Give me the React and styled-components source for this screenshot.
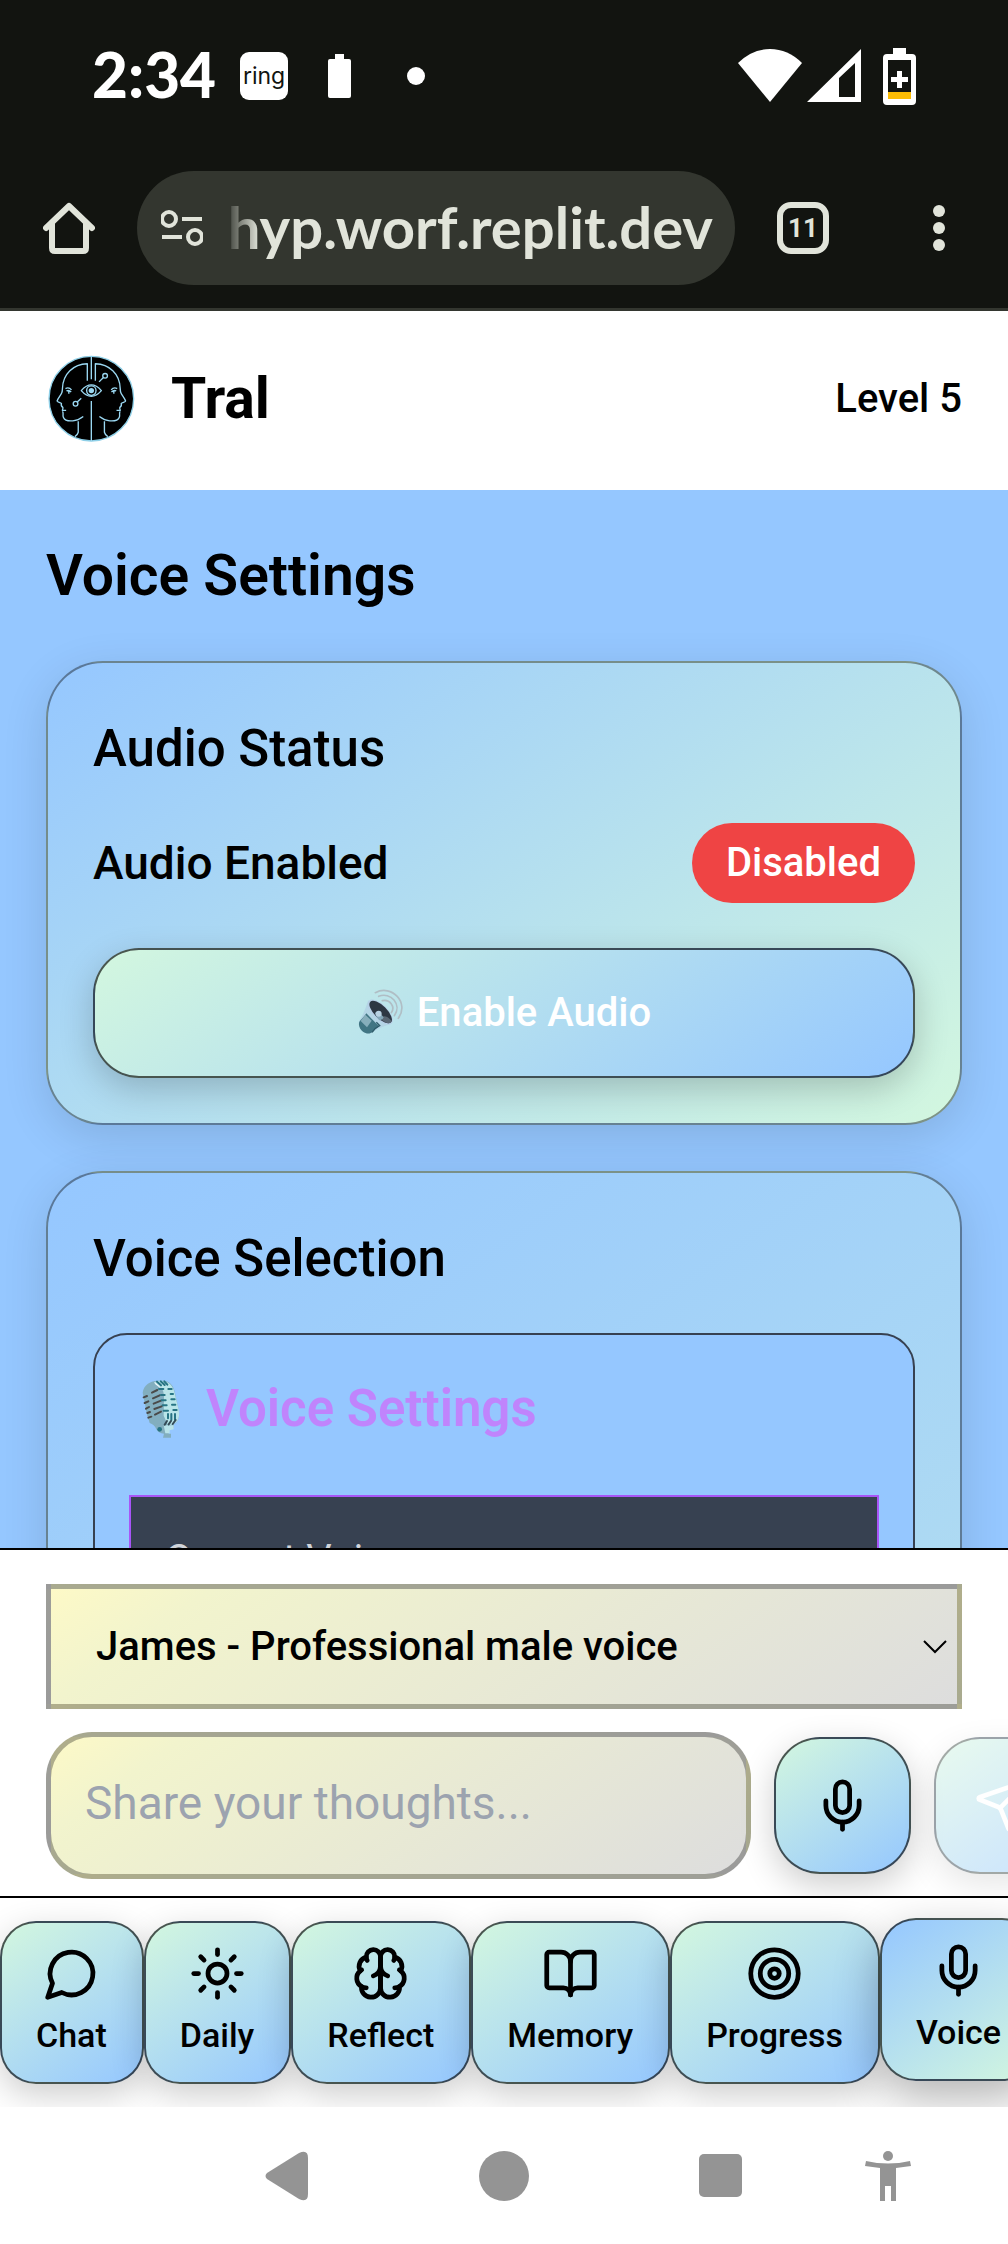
import React, { useState } from "react";
import styled, { createGlobalStyle, css } from "styled-components";
import { BookOpen, Mic, Send, Sun, Target } from "lucide-react";

const sky = "#95c7ff";
const mint = "#d3f7df";
const chrome = "#121410";
const chromeInk = "#e1e4da";

const GlobalStyle = createGlobalStyle`
  *, *::before, *::after { box-sizing: border-box; }
  body { margin: 0; background: #ffffff; }
  h1, h2, h3, p { margin: 0; }
  button, input, select, textarea { font: inherit; color: inherit; }
`;

const Shell = styled.div`
  display: flex;
  flex-direction: column;
  height: 100vh;
  overflow: hidden;
  font-family: Roboto, "Liberation Sans", sans-serif;
  color: #000000;
  background: #ffffff;
`;

/* Phone status bar */

const StatusBar = styled.div`
  flex: none;
  display: flex;
  align-items: center;
  justify-content: space-between;
  height: 154px;
  padding: 0 92px 2px;
  background: ${chrome};
  color: #ffffff;
`;

const StatusGroup = styled.div`
  display: flex;
  align-items: center;
  gap: ${(p) => p.$gap}px;
`;

const Clock = styled.span`
  padding-bottom: 4px;
  font-family: Lato, "Open Sans", sans-serif;
  font-size: 62px;
  font-weight: 900;
  line-height: 76px;
`;

const RingBadge = styled.span`
  display: grid;
  place-items: center;
  width: 48px;
  height: 48px;
  border-radius: 9px;
  background: #ffffff;
  color: ${chrome};
  font-family: Inter, sans-serif;
  font-size: 23px;
  line-height: 28px;
`;

/* Browser toolbar */

const Toolbar = styled.div`
  flex: none;
  display: flex;
  align-items: center;
  height: 157px;
  padding: 6px 43px 12px;
  gap: 42px;
  background: ${chrome};
  border-bottom: 3px solid #33362f;
  color: ${chromeInk};
`;

const PlainButton = styled.button`
  display: grid;
  place-items: center;
  flex: none;
  padding: 0;
  border: 0;
  background: none;
`;

const AddressPill = styled.label`
  flex: 1;
  min-width: 0;
  display: flex;
  align-items: center;
  gap: 22px;
  height: 114px;
  padding: 0 22px 0 24px;
  border-radius: 57px;
  background: #33362f;
`;

const AddressInput = styled.input`
  flex: 1;
  min-width: 0;
  padding: 0 0 3px;
  border: 0;
  outline: 0;
  background: none;
  text-align: right;
  font-family: Lato, "Open Sans", sans-serif;
  font-size: 58px;
  font-weight: 700;
  line-height: 72px;
  mask-image: linear-gradient(to right, transparent, #000000 34px);
`;

const TabCount = styled(PlainButton)`
  width: 52px;
  height: 52px;
  border: 6px solid ${chromeInk};
  border-radius: 14px;
  font-family: Roboto, sans-serif;
  font-size: 26px;
  font-weight: 700;
  line-height: 30px;
`;

const MenuButton = styled(PlainButton)`
  width: 52px;
  margin-left: 42px;
`;

/* App */

const Header = styled.header`
  flex: none;
  display: flex;
  align-items: center;
  justify-content: space-between;
  padding: 42px 46px 46px;
`;

const Brand = styled.div`
  display: flex;
  align-items: center;
  gap: 34px;
`;

const BrandName = styled.h1`
  font-size: 57px;
  font-weight: 700;
  line-height: 80px;
`;

const Level = styled.span`
  font-size: 40px;
  font-weight: 500;
  line-height: 58px;
`;

const Content = styled.main`
  flex: 1;
  min-height: 0;
  overflow: hidden;
  display: flex;
  flex-direction: column;
  gap: 46px;
  padding: 46px 46px 0;
  background: ${sky};
`;

const PageTitle = styled.h2`
  flex: none;
  font-size: 57px;
  font-weight: 600;
  line-height: 79px;
`;

const Card = styled.section`
  flex: none;
  padding: 46px 45px 45px;
  border: 2px solid rgba(0, 0, 0, 0.4);
  border-radius: 57px;
  background: linear-gradient(145deg, ${sky}, ${mint});
  box-shadow: 0 12px 46px rgba(0, 0, 0, 0.12);
`;

const CardTitle = styled.h3`
  margin-bottom: 34px;
  font-size: 51px;
  font-weight: 500;
  line-height: 80px;
`;

const StatusRow = styled.div`
  display: flex;
  align-items: center;
  justify-content: space-between;
  margin-bottom: 45px;
  font-size: 46px;
  font-weight: 500;
  line-height: 70px;
`;

const StatePill = styled.span`
  padding: 11px 34px;
  border-radius: 40px;
  background: #ef4444;
  color: #ffffff;
  font-size: 40px;
  line-height: 58px;
`;

const raised = css`
  border: 2px solid rgba(0, 0, 0, 0.65);
  background: linear-gradient(145deg, ${mint}, ${sky});
  box-shadow: 0 11px 34px rgba(0, 0, 0, 0.2);
`;

const EnableButton = styled.button`
  ${raised}
  display: flex;
  align-items: center;
  justify-content: center;
  gap: 10px;
  width: 100%;
  padding: 34px;
  border-radius: 46px;
  color: #ffffff;
  font-size: 40px;
  font-weight: 500;
  line-height: 58px;
`;

const VoicePanel = styled.div`
  min-height: 1760px;
  padding: 34px;
  border: 2px solid #374151;
  border-radius: 34px;
  background: ${sky};
`;

const PanelTitle = styled.h3`
  display: flex;
  align-items: center;
  gap: 13px;
  margin-bottom: 46px;
  color: #c084fc;
  font-size: 51px;
  font-weight: 600;
  line-height: 80px;
`;

const CurrentVoice = styled.div`
  padding: 34px;
  border: 2px solid #a855f7;
  background: #374151;
  color: #d1d5db;
  font-size: 40px;
  line-height: 58px;
`;

/* Composer */

const Composer = styled.form`
  flex: none;
  display: flex;
  flex-direction: column;
  gap: 23px;
  padding: 34px 46px 17px;
  border-top: 2px solid #000000;
  overflow: hidden;
`;

const field = css`
  border: 5px solid rgba(0, 0, 0, 0.3);
  background: linear-gradient(145deg, #fdf9c7, #f2f4cd 15%, #dddddd);
  outline: 0;
`;

const SelectWrap = styled.div`
  position: relative;
`;

const VoiceSelect = styled.select`
  ${field}
  appearance: none;
  display: block;
  width: 100%;
  height: 125px;
  padding: 0 46px 0 45px;
  border-radius: 0;
  font-size: 40px;
  font-weight: 500;
`;

const SelectArrow = styled.svg`
  position: absolute;
  right: 14px;
  top: 50%;
  transform: translateY(-50%);
  pointer-events: none;
`;

const InputRow = styled.div`
  display: flex;
  align-items: center;
  gap: 23px;
`;

const ThoughtBox = styled.textarea`
  ${field}
  flex: none;
  display: block;
  width: 77%;
  height: 147px;
  padding: 34px;
  border-radius: 46px;
  resize: none;
  overflow: hidden;
  font-size: 46px;
  line-height: 64px;
  &::placeholder { color: #9ca3af; opacity: 1; }
`;

const RoundButton = styled.button`
  ${raised}
  display: grid;
  place-items: center;
  flex: none;
  width: 137px;
  height: 137px;
  padding: 0;
  border-radius: 46px;
  color: ${(p) => (p.disabled ? "#ffffff" : "#000000")};
  opacity: ${(p) => (p.disabled ? 0.5 : 1)};
`;

/* Tabs */

const TabBar = styled.nav`
  flex: none;
  display: flex;
  padding: 23px 0;
  border-top: 2px solid #000000;
  overflow: hidden;
`;

const TabButton = styled.button`
  ${raised}
  flex: none;
  display: flex;
  flex-direction: column;
  align-items: center;
  gap: 10px;
  padding: 22px 35px 24px 34px;
  border-radius: 36px;
  font-size: 34px;
  font-weight: 500;
  line-height: 46px;
  ${(p) =>
    p.$active &&
    css`
      background: linear-gradient(145deg, ${sky}, ${mint});
      box-shadow: 0 17px 46px rgba(0, 0, 0, 0.3);
      transform: translateY(-3px);
    `}
`;

/* System navigation */

const SystemNav = styled.div`
  flex: none;
  display: grid;
  grid-template-columns: 178fr 217fr 217fr 217fr 117fr 62fr;
  align-items: center;
  height: 137px;
  color: #949494;
  & > :first-child { grid-column: 2; }
`;

function ChatIcon() {
  return (
    <svg width="57" height="57" viewBox="0 0 24 24" fill="none" stroke="currentColor" strokeWidth="2" strokeLinecap="round" strokeLinejoin="round">
      <path d="M7.9 20A9 9 0 1 0 4 16.1L2 22Z" />
    </svg>
  );
}

function BrainIcon() {
  return (
    <svg width="57" height="57" viewBox="0 0 24 24" fill="none" stroke="currentColor" strokeWidth="2" strokeLinecap="round" strokeLinejoin="round">
      <path d="M12 5a3 3 0 1 0-5.997.125 4 4 0 0 0-2.526 5.77 4 4 0 0 0 .556 6.588A4 4 0 1 0 12 18Z" />
      <path d="M12 5a3 3 0 1 1 5.997.125 4 4 0 0 1 2.526 5.77 4 4 0 0 1-.556 6.588A4 4 0 1 1 12 18Z" />
      <path d="M15 13a4.5 4.5 0 0 1-3-4 4.5 4.5 0 0 1-3 4" />
      <path d="M17.599 6.5a3 3 0 0 0 .399-1.375" />
      <path d="M6.003 5.125A3 3 0 0 0 6.401 6.5" />
      <path d="M3.477 10.896a4 4 0 0 1 .585-.396" />
      <path d="M19.938 10.5a4 4 0 0 1 .585.396" />
      <path d="M6 18a4 4 0 0 1-1.967-.516" />
      <path d="M19.967 17.484A4 4 0 0 1 18 18" />
    </svg>
  );
}

function HeadProfile() {
  return (
    <>
      <path d="M115 75V24C74 25 42 54 41 98L40 108C38 116 28 126 25 135C25 138 35 139 38 142C36 148 38 151 42 154C44 158 40 160 41 163H52M41 166C46 172 40 176 44 184C48 194 60 195 72 194C84 193 94 188 103 181" />
      <path d="M88 195V228Q86 236 78 241" />
      <path d="M50 98Q60 92 68 102M53 105Q60 101 67 108M60 106V113" />
    </>
  );
}

function Logo() {
  return (
    <svg width="91" height="91" viewBox="-8 -8 271 271" role="img" aria-label="Two mirrored profiles">
      <circle cx="127" cy="128" r="126" fill="#000000" stroke="#8fd0e8" strokeWidth="4" />
      <g fill="none" stroke="#9bd8f2" strokeWidth="4" strokeLinejoin="round">
        <HeadProfile />
        <g transform="translate(254 0) scale(-1 1)">
          <HeadProfile />
        </g>
        <path d="M127 2V70M127 135V254" />
        <path d="M97 104Q127 70 157 104Q127 138 97 104Z" />
        <circle cx="127" cy="104" r="14" />
        <circle cx="168" cy="60" r="7" />
        <path d="M163 65L150 78" />
        <circle cx="80" cy="143" r="7" />
        <path d="M85 138L97 127" />
      </g>
      <circle cx="127" cy="104" r="8" fill="#9bd8f2" />
    </svg>
  );
}

function SpeakerPicture() {
  return (
    <svg width="50" height="50" viewBox="0 0 150 150" aria-hidden="true">
      <g fill="none" stroke="#b0bec5" strokeWidth="5" strokeLinecap="round">
        <path d="M55 14C104 -12 158 44 124 91" />
        <path d="M65 25C101 10 136 50 112 83" />
        <path d="M76 38C98 32 116 56 103 74" />
      </g>
      <path d="M34 37C28 52 22 76 8 96C2 106 6 122 17 130C27 138 39 139 48 131C65 120 86 112 104 107Z" fill="#b4d5e5" />
      <path d="M28 76C22 86 12 94 8 100C2 110 9 124 18 131C28 138 40 138 47 131C52 124 60 120 66 115Z" fill="#417583" />
      <path d="M25 80L44 98L30 118L11 99Z" fill="#87aebb" />
      <path d="M58 103L68 113Q55 119 45 133" fill="none" stroke="#2f5c6a" strokeWidth="4" />
      <ellipse cx="70" cy="72" rx="48" ry="22" transform="rotate(45 70 72)" fill="#b7cfe7" />
      <ellipse cx="71" cy="72" rx="44" ry="19" transform="rotate(45 71 72)" fill="#2d3743" />
      <path d="M70 90Q86 76 104 99Q101 109 88 104Q76 100 70 90Z" fill="#596774" />
      <path d="M54 75Q60 68 67 73L80 88Q76 99 66 96Q58 88 54 75Z" fill="#83a6b8" />
      <circle cx="65" cy="77" r="9" fill="#b8d1e2" />
    </svg>
  );
}

function StudioMicPicture() {
  return (
    <svg width="64" height="64" viewBox="0 0 192 192" aria-hidden="true">
      <path d="M50 95L62 138Q76 142 82 157Q88 169 105 170L102 182H126V170H119L120 158L134 154V140Z" fill="#82aebf" />
      <path d="M104 145H134V157L122 160V169H109Z" fill="#b8e3e9" />
      <path d="M41 47C44 20 72 8 96 12C118 9 132 22 137 44L149 98C154 124 146 143 119 145L75 138C62 137 57 126 54 110Z" fill="#82aebf" />
      <path d="M75 16C106 3 129 18 136 44L149 98C154 125 145 144 117 144L104 116L105 54Q101 26 75 16Z" fill="#b9e5e9" />
      <path d="M75 16C86 20 94 29 97 36L79 22Z" fill="#f0fbfc" />
      <g stroke="#344b57" strokeWidth="6" strokeLinecap="round">
        <path d="M69 47L85 39M72 64L92 55M74 80L96 71M76 96L98 88M78 113L96 104" stroke="#4a4a4a" />
        <path d="M44 61L54 57M47 78L58 73M51 95L60 90M55 108L63 105M58 122L67 119" stroke="#4a4a4a" />
        <path d="M90 36H103M96 54H107M98 70H110M101 85H113M104 101H117M118 36H128M125 51H132M127 67H137M129 83H139M133 99H143" stroke="#277484" />
        <path d="M84 14L96 25M95 13L107 24M106 13L115 23M117 111V124M127 111V129M138 111V128" stroke="#277484" />
        <path d="M107 143L114 132M119 142L126 132M131 141L140 129" />
      </g>
      <circle cx="92" cy="157" r="7" fill="#277484" />
    </svg>
  );
}

const tabs = [
  { label: "Chat", icon: <ChatIcon /> },
  { label: "Daily", icon: <Sun size={57} /> },
  { label: "Reflect", icon: <BrainIcon /> },
  { label: "Memory", icon: <BookOpen size={57} /> },
  { label: "Progress", icon: <Target size={57} /> },
  { label: "Voice", icon: <Mic size={57} /> },
];

export default function App() {
  const [active, setActive] = useState("Voice");
  const [thought, setThought] = useState("");

  return (
    <Shell>
      <GlobalStyle />
      <StatusBar>
        <StatusGroup $gap={28}>
          <StatusGroup $gap={24}>
            <Clock>2:34</Clock>
            <RingBadge>ring</RingBadge>
          </StatusGroup>
          <svg width="48" height="48" viewBox="0 0 48 48" aria-hidden="true">
            <path d="M19 2h9v5h5q2 0 2 2v35q0 2-2 2H14q-2 0-2-2V9q0-2 2-2h5z" fill="#fff" />
          </svg>
          <svg width="48" height="48" viewBox="0 0 48 48" aria-hidden="true">
            <circle cx="24" cy="24" r="9" fill="#fff" />
          </svg>
        </StatusGroup>
        <StatusGroup $gap={5}>
          <svg width="64" height="58" viewBox="0 0 64 58" aria-label="Wi-Fi" role="img">
            <path d="M0 16Q14 2 32 2T64 16L32 55Z" fill="#fff" />
          </svg>
          <svg width="54" height="58" viewBox="0 0 54 58" aria-label="Mobile signal" role="img">
            <path fillRule="evenodd" d="M0 55L54 2V55ZM32 50H48V16L32 31Z" fill="#fff" />
          </svg>
          <svg width="50" height="58" viewBox="0 0 50 58" aria-label="Battery saver" role="img">
            <path fillRule="evenodd" d="M27 1h13v6h6q4 0 4 4v43q0 4-4 4H21q-4 0-4-4V11q0-4 4-4h6zM22 13V52H45V13Z" fill="#fff" />
            <path d="M22 45h23v7H22z" fill="#fbbc05" />
            <path d="M31 24h5v6h6v5h-6v6h-5v-6h-6v-5h6z" fill="#fff" />
          </svg>
        </StatusGroup>
      </StatusBar>

      <Toolbar>
        <PlainButton type="button" aria-label="Home">
          <svg width="52" height="52" viewBox="0 0 52 52" fill="none" stroke="currentColor" strokeWidth="6" strokeLinecap="round" strokeLinejoin="round">
            <path d="M3 26L26 4L49 26M9 22V46Q9 49 12 49H40Q43 49 43 46V22" />
          </svg>
        </PlainButton>
        <AddressPill>
          <svg width="42" height="36" viewBox="0 0 42 36" fill="none" stroke="currentColor" strokeWidth="4" aria-hidden="true">
            <circle cx="8" cy="9" r="7" />
            <path d="M21 9H41M1 27H21" />
            <circle cx="34" cy="27" r="7" />
          </svg>
          <AddressInput aria-label="Address" defaultValue="hyp.worf.replit.dev" />
        </AddressPill>
        <TabCount type="button" aria-label="Open tabs">11</TabCount>
        <MenuButton type="button" aria-label="Menu">
          <svg width="12" height="46" viewBox="0 0 12 46" fill="currentColor">
            <circle cx="6" cy="6" r="6" />
            <circle cx="6" cy="23" r="6" />
            <circle cx="6" cy="40" r="6" />
          </svg>
        </MenuButton>
      </Toolbar>

      <Header>
        <Brand>
          <Logo />
          <BrandName>Tral</BrandName>
        </Brand>
        <Level>Level 5</Level>
      </Header>

      <Content>
        <PageTitle>Voice Settings</PageTitle>
        <Card>
          <CardTitle>Audio Status</CardTitle>
          <StatusRow>
            <span>Audio Enabled</span>
            <StatePill>Disabled</StatePill>
          </StatusRow>
          <EnableButton type="button">
            <SpeakerPicture />
            Enable Audio
          </EnableButton>
        </Card>
        <Card>
          <CardTitle>Voice Selection</CardTitle>
          <VoicePanel>
            <PanelTitle>
              <StudioMicPicture />
              Voice Settings
            </PanelTitle>
            <CurrentVoice>Current Voice</CurrentVoice>
          </VoicePanel>
        </Card>
      </Content>

      <Composer onSubmit={(e) => e.preventDefault()}>
        <SelectWrap>
          <VoiceSelect aria-label="Voice" defaultValue="james">
            <option value="james">James - Professional male voice</option>
          </VoiceSelect>
          <SelectArrow width="26" height="16" viewBox="0 0 26 16" fill="none" stroke="#000" strokeWidth="2" aria-hidden="true">
            <path d="M2 2L13 13L24 2" />
          </SelectArrow>
        </SelectWrap>
        <InputRow>
          <ThoughtBox
            aria-label="Share your thoughts"
            placeholder="Share your thoughts..."
            rows={1}
            value={thought}
            onChange={(e) => setThought(e.target.value)}
          />
          <RoundButton type="button" aria-label="Record">
            <Mic size={57} />
          </RoundButton>
          <RoundButton type="submit" aria-label="Send" disabled={!thought}>
            <Send size={57} />
          </RoundButton>
        </InputRow>
      </Composer>

      <TabBar>
        {tabs.map((tab) => (
          <TabButton key={tab.label} type="button" $active={tab.label === active} onClick={() => setActive(tab.label)}>
            {tab.icon}
            {tab.label}
          </TabButton>
        ))}
      </TabBar>

      <SystemNav>
        <PlainButton type="button" aria-label="Back">
          <svg width="44" height="50" viewBox="0 0 44 50" fill="currentColor">
            <path d="M2 22L34 2Q43 -2 43 7V43Q43 52 34 48L2 28Q-1 25 2 22Z" />
          </svg>
        </PlainButton>
        <PlainButton type="button" aria-label="Home screen">
          <svg width="50" height="50" viewBox="0 0 50 50" fill="currentColor">
            <circle cx="25" cy="25" r="25" />
          </svg>
        </PlainButton>
        <PlainButton type="button" aria-label="Recent apps">
          <svg width="43" height="43" viewBox="0 0 43 43" fill="currentColor">
            <rect width="43" height="43" rx="5" />
          </svg>
        </PlainButton>
        <PlainButton type="button" aria-label="Accessibility">
          <svg width="46" height="50" viewBox="0 0 46 50" fill="currentColor">
            <circle cx="23" cy="5" r="5" />
            <path d="M1 10Q23 15 45 10L46 15L31 17V50H26V35H20V50H15V17L0 15Z" />
          </svg>
        </PlainButton>
      </SystemNav>
    </Shell>
  );
}
